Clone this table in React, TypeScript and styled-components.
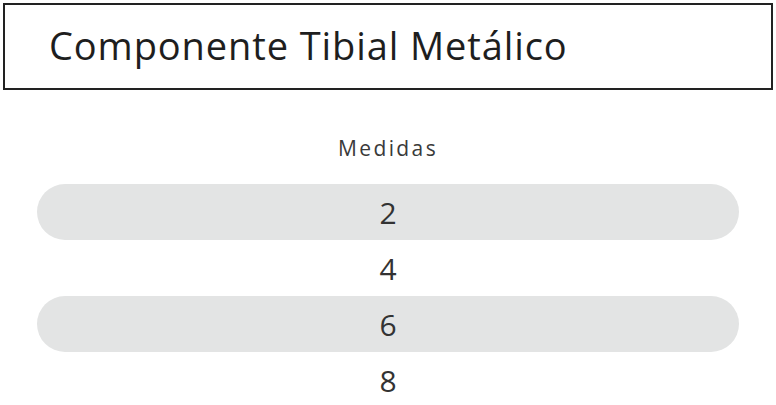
import styled, { createGlobalStyle } from "styled-components";

const GlobalStyle = createGlobalStyle`
  body {
    margin: 0;
    background: #ffffff;
    font-family: "Open Sans", "Liberation Sans", sans-serif;
  }
`;

const Page = styled.div`
  padding: 3px 3px 0 3px;
`;

const TitleBox = styled.header`
  height: 87px;
  box-sizing: border-box;
  border: 2px solid #222;
  display: flex;
  align-items: center;
  padding-left: 44px;
`;

const Title = styled.h1`
  margin: 0 0 4px;
  font-size: 38px;
  font-weight: 400;
  color: #1e1e1e;
  letter-spacing: 0.9px;
`;

const Sizes = styled.section`
  margin: 43px 34px 0 34px;
  display: flex;
  flex-direction: column;
  align-items: stretch;
`;

const Label = styled.p`
  margin: 0 0 21px;
  text-align: center;
  font-size: 21px;
  letter-spacing: 2.4px;
  color: #3a3a3a;
  line-height: 30px;
`;

const Row = styled.div<{ $shaded: boolean }>`
  height: 56px;
  border-radius: 28px;
  background: ${({ $shaded }) => ($shaded ? "#e3e4e4" : "transparent")};
  display: flex;
  align-items: center;
  justify-content: center;
  font-size: 30px;
  color: #333;
`;

const sizes = [2, 4, 6, 8];

export default function App() {
  return (
    <Page>
      <GlobalStyle />
      <TitleBox>
        <Title>Componente Tibial Metálico</Title>
      </TitleBox>
      <Sizes>
        <Label>Medidas</Label>
        {sizes.map((size, index) => (
          <Row key={size} $shaded={index % 2 === 0}>
            {size}
          </Row>
        ))}
      </Sizes>
    </Page>
  );
}
